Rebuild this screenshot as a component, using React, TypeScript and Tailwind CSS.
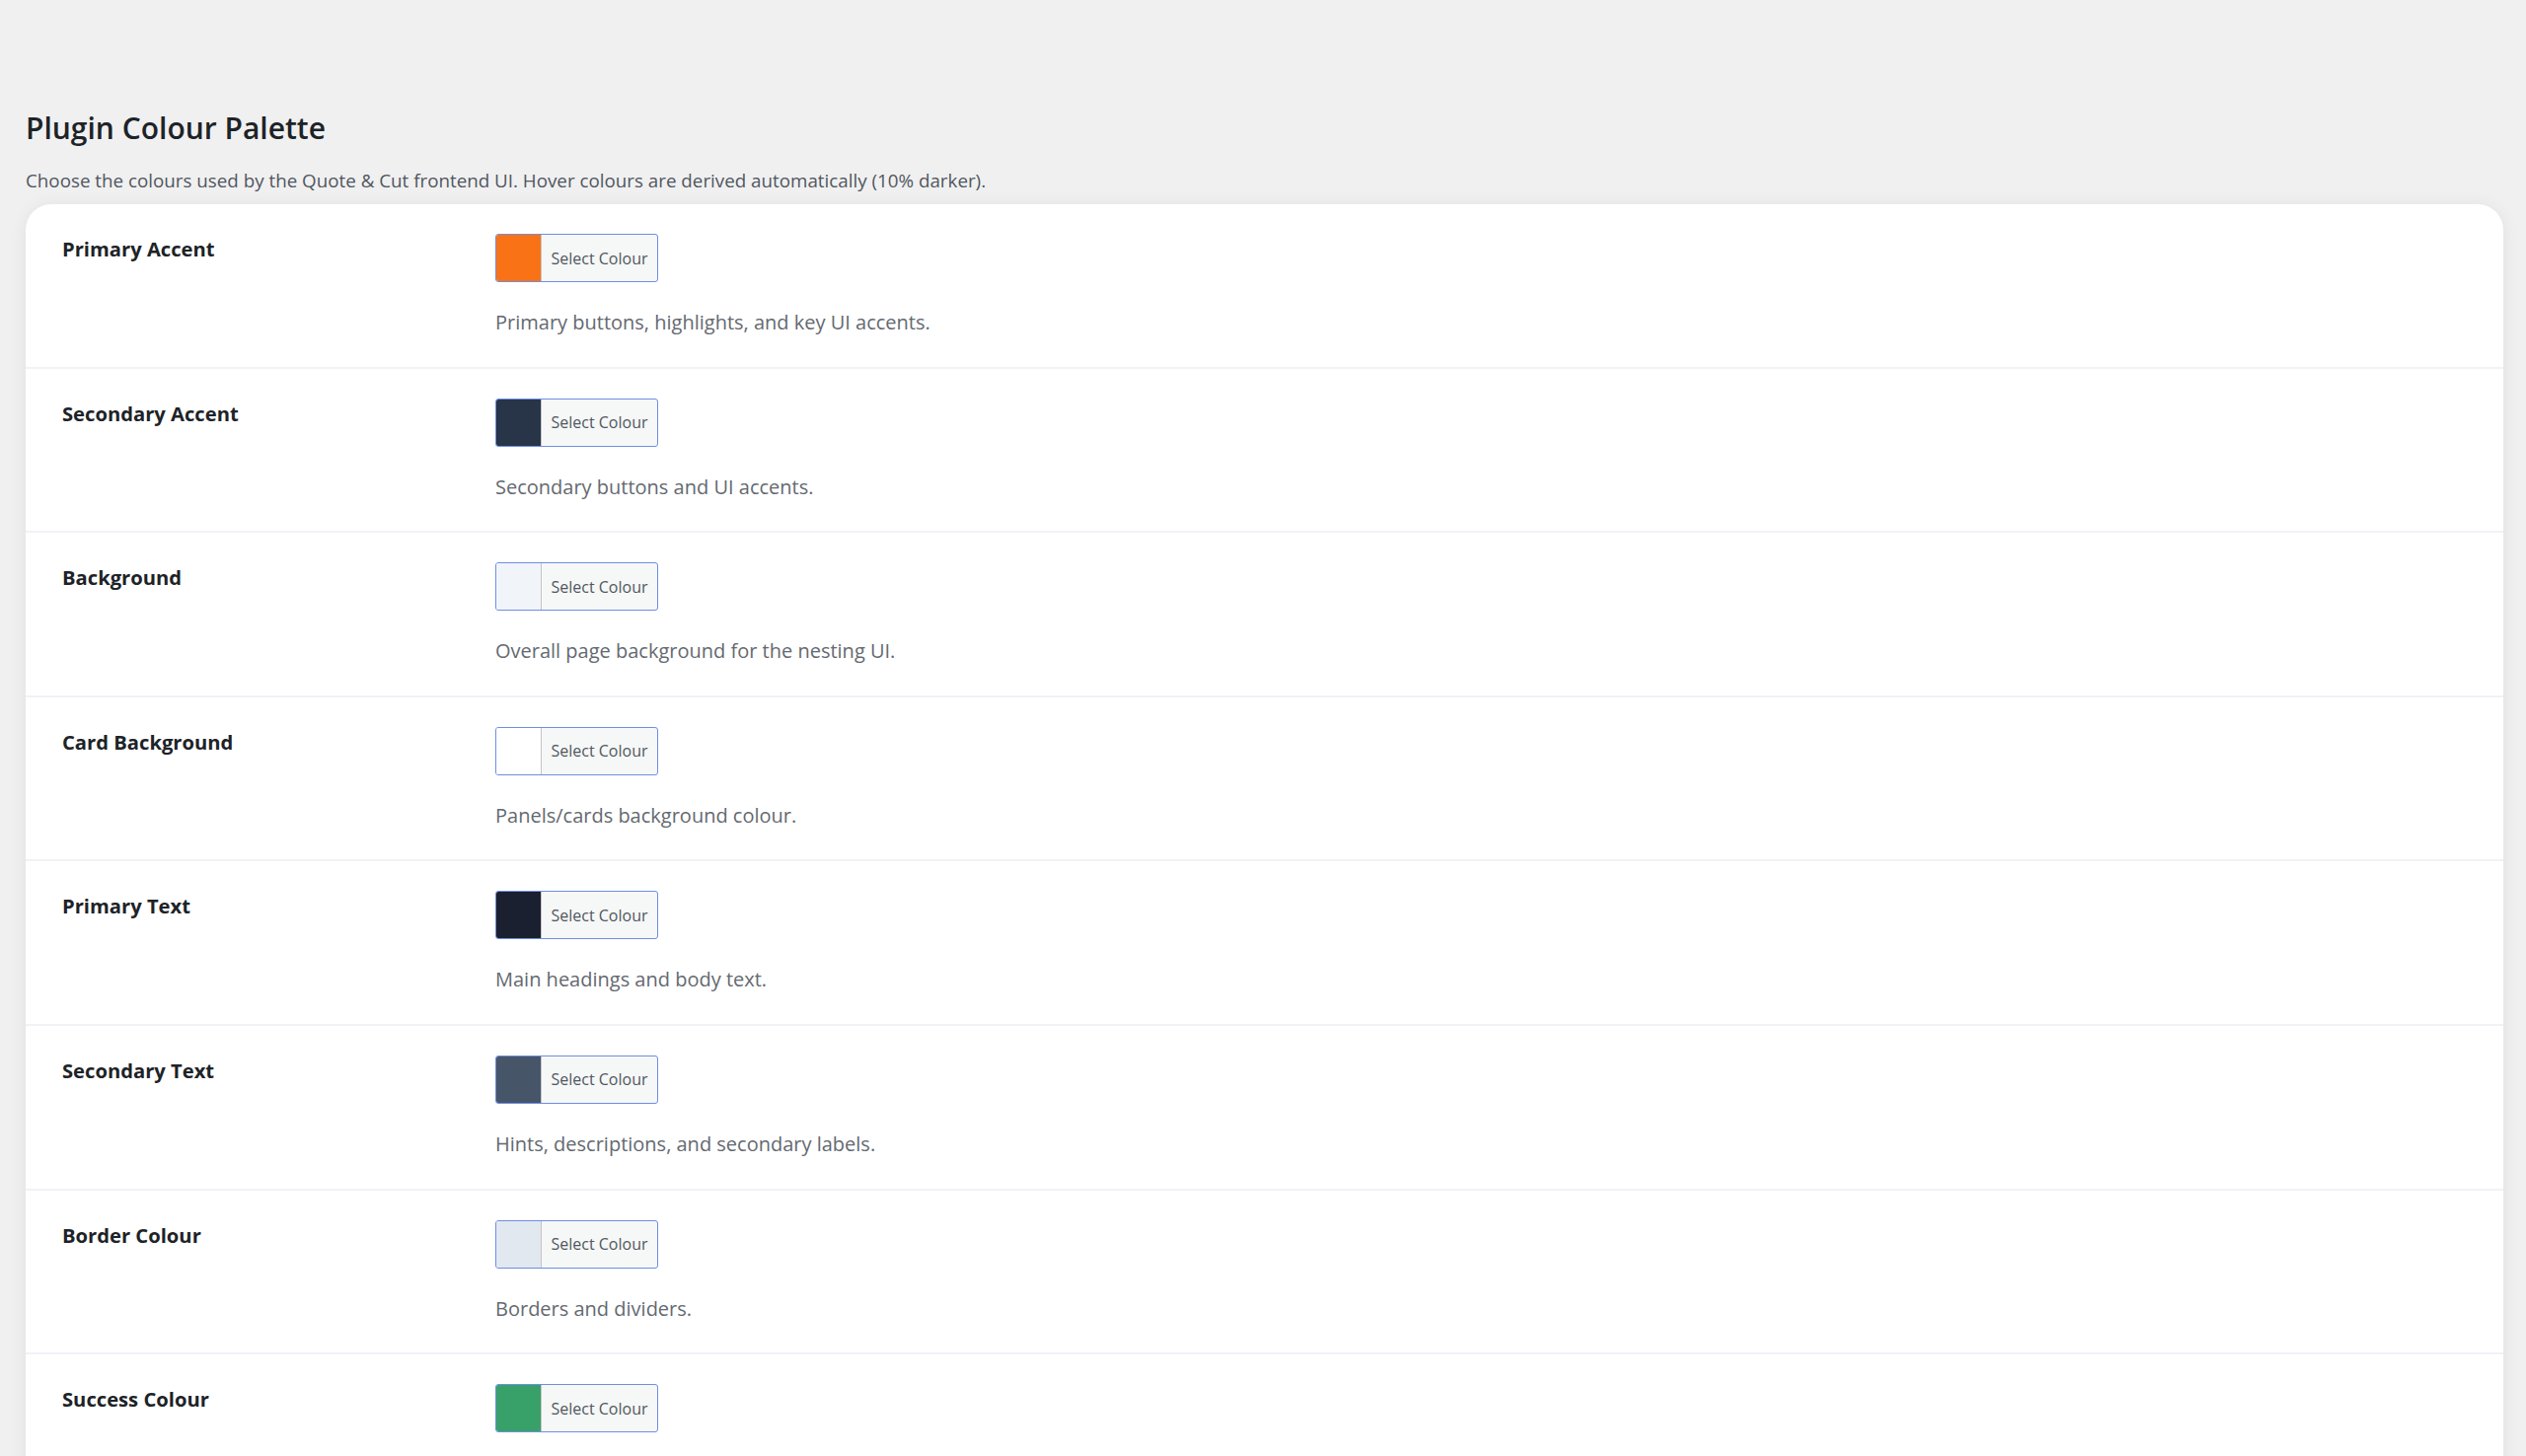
const palette = [
  { key: 'primary_accent', label: 'Primary Accent', color: '#f97316', hint: 'Primary buttons, highlights, and key UI accents.' },
  { key: 'secondary_accent', label: 'Secondary Accent', color: '#283447', hint: 'Secondary buttons and UI accents.' },
  { key: 'background', label: 'Background', color: '#f1f5f9', hint: 'Overall page background for the nesting UI.' },
  { key: 'card_background', label: 'Card Background', color: '#ffffff', hint: 'Panels/cards background colour.' },
  { key: 'primary_text', label: 'Primary Text', color: '#1a2030', hint: 'Main headings and body text.' },
  { key: 'secondary_text', label: 'Secondary Text', color: '#475569', hint: 'Hints, descriptions, and secondary labels.' },
  { key: 'border_colour', label: 'Border Colour', color: '#e2e8f0', hint: 'Borders and dividers.' },
  { key: 'success_colour', label: 'Success Colour', color: '#38a169', hint: 'Success messages and confirmations.' },
];

function ColourButton({ color }: { color: string }) {
  return (
    <button
      type="button"
      className="flex h-[49px] w-[165px] items-stretch overflow-hidden rounded-[3px] border-[1.5px] border-[#6f8ee3] bg-[#f6f7f7] p-0"
    >
      <span className="w-[46px] shrink-0 border-r border-[#c3c4c7]" style={{ backgroundColor: color }} />
      <span className="flex flex-1 items-center justify-center text-[16px] text-[#50575e]">Select Colour</span>
    </button>
  );
}

export default function App() {
  return (
    <div
      className="min-h-screen bg-[#f0f0f1] pl-[26px] pr-[23px] pt-[110px]"
      style={{ fontFamily: '"Segoe UI", "Open Sans", "Noto Sans", sans-serif' }}
    >
      <h1 className="text-[30px] font-semibold leading-[40px] text-[#1d2327]">Plugin Colour Palette</h1>
      <p className="mt-[19px] text-[18.8px] leading-[28px] text-[#50575e]">
        Choose the colours used by the Quote &amp; Cut frontend UI. Hover colours are derived automatically (10% darker).
      </p>

      <div className="mt-[10px] overflow-hidden rounded-[26px] bg-white shadow-[0_2px_18px_rgba(0,0,0,0.07)]">
        {palette.map((item, i) => (
          <div
            key={item.key}
            className={`flex pb-[29.6px] pt-[30px] ${i < palette.length - 1 ? 'border-b-2 border-[#f0f2f6]' : ''}`}
          >
            <div className="w-[476px] shrink-0 pl-[37px] pt-[1px] text-[20.2px] font-bold leading-[28px] text-[#1d2327]">
              {item.label}
            </div>
            <div className="flex flex-col">
              <ColourButton color={item.color} />
              <p className="mt-[25px] text-[20px] leading-[31px] text-[#646970]">{item.hint}</p>
            </div>
          </div>
        ))}
      </div>
    </div>
  );
}
